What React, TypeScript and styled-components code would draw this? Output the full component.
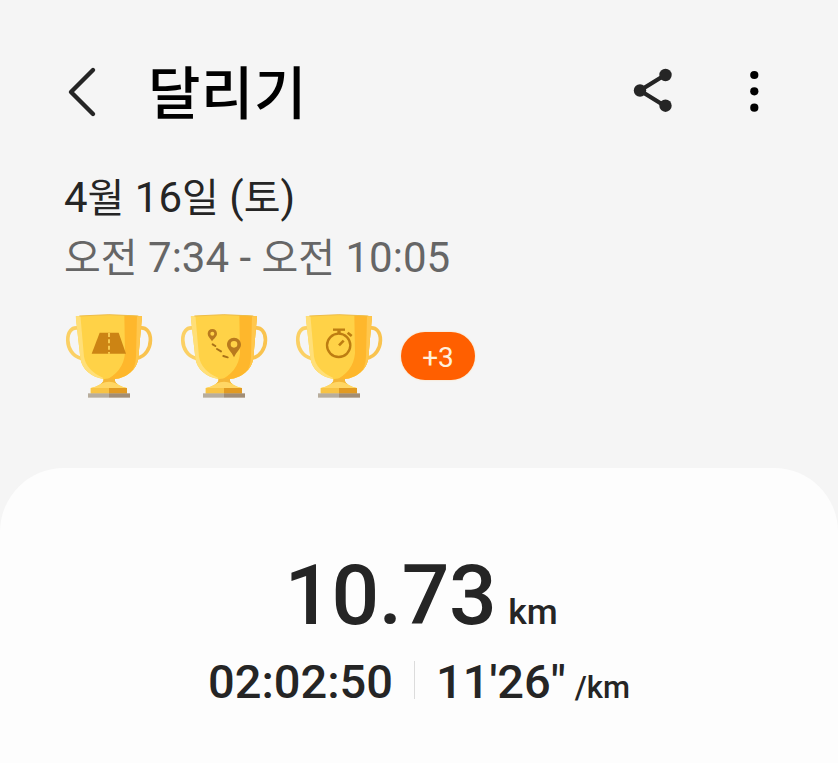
import React from 'react'
import styled, { createGlobalStyle } from 'styled-components'

const GlobalStyle = createGlobalStyle`
    * {
        box-sizing: border-box;
    }
    body {
        margin: 0;
        background-color: #f5f5f5;
        font-family: Roboto, "Noto Sans CJK KR", sans-serif;
        color: #252525;
    }
`

const Page = styled.div`
    display: flex;
    flex-direction: column;
    height: 763px;
    overflow: hidden;
`

const Header = styled.header`
    display: flex;
    align-items: center;
    height: 80px;
    margin-top: 52px;
    padding: 0 65px 0 64px;
`

const IconButton = styled.button<{ $width: number }>`
    display: flex;
    width: ${({ $width }) => $width}px;
    height: 60px;
    padding: 0;
    align-items: center;
    justify-content: center;
    border: none;
    background: none;
`

const Title = styled.h1`
    flex: 1;
    margin: 0 0 0 48px;
    padding-top: 6px;
    font-size: 57px;
    line-height: 80px;
    font-weight: 500;
    letter-spacing: 0.5px;
    color: #000;
`

const Actions = styled.div`
    display: flex;
    gap: 54px;
`

const Summary = styled.section`
    height: 336px;
    padding: 36px 64px 0;
`

const DateText = styled.p`
    margin: 0;
    font-size: 42px;
    line-height: 60px;
`

const TimeRange = styled(DateText)`
    color: #666;
`

/* hangul runs a bit large next to Roboto digits */
const Ko = styled.span`
    font-size: 40px;
    line-height: 1;
`

const Rewards = styled.div`
    display: flex;
    align-items: center;
    gap: 27px;
    margin: 24px 0 0 0.5px;
`

const More = styled.span`
    width: 74px;
    height: 48px;
    margin: -1px 0 0 -8.5px;
    border-radius: 24px;
    background-color: #ff5f00;
    box-shadow: 0 0 2px #ffd9a8;
    color: #fff0dc;
    font-size: 28px;
    line-height: 51px;
    text-align: center;
`

const Card = styled.main`
    flex: 1;
    padding: 79px 0 0;
    border-radius: 64px 64px 0 0;
    background-color: #fdfdfd;
`

const Distance = styled.div`
    display: flex;
    align-items: baseline;
    justify-content: center;
    gap: 12px;
    height: 100px;
    padding-left: 4px;
    font-size: 84px;
    line-height: 98px;
    font-weight: 500;
    letter-spacing: -0.5px;
`

const Unit = styled.span<{ $size: number }>`
    font-size: ${({ $size }) => $size}px;
    line-height: 1;
    letter-spacing: 0;
    font-weight: 500;
`

const Stats = styled.div`
    display: flex;
    align-items: center;
    justify-content: center;
    height: 70px;
    font-size: 47px;
    line-height: 70px;
    font-weight: 500;
`

const Divider = styled.span`
    width: 1px;
    height: 38px;
    margin: -4px 21px 0;
    background-color: #dcdcdc;
`

const Pace = styled.div`
    display: flex;
    align-items: baseline;
    gap: 9px;
`

const RoadMark = () => (
    <>
        <path d="M134 98H191L213 161H110Z" fill="#cc8414" />
        <path d="M162 99V161" stroke="#ffd75a" strokeWidth="5" strokeDasharray="12 7" />
    </>
)

const RouteMark = () => (
    <g fill="#b97a1e">
        <path fillRule="evenodd" d="M127 87c-8 0-14 6-14 14 0 8 8 14 13 23 6-9 15-15 15-23 0-8-6-14-14-14zm0 8a6 6 0 1 1 0 12 6 6 0 0 1 0-12z" />
        <path fillRule="evenodd" d="M192 113c-12 0-21 9-21 21 0 12 14 21 21 38 7-17 21-26 21-38 0-12-9-21-21-21zm0 10a10 10 0 1 1 0 20 10 10 0 0 1 0-20z" />
        <path d="M128 133l8 5M141 147l12 7M160 168l13 4" stroke="#a87218" strokeWidth="6" strokeLinecap="round" />
    </g>
)

const TimerMark = () => (
    <g fill="none" stroke="#bd7d12">
        <circle cx="161" cy="136" r="35" strokeWidth="7" />
        <path d="M144 89H180" strokeWidth="7" />
        <path d="M162 91V102" strokeWidth="10" />
        <path d="M188 98l12 10" strokeWidth="8" />
        <path d="M162 136l14-14" strokeWidth="8" />
    </g>
)

const Trophy = ({ id, children }: { id: string; children: React.ReactNode }) => (
    <svg width="88" height="88" viewBox="30 36 264 264">
        <defs>
            <clipPath id={id}>
                <path d="M62 49Q162 40 261 49L250 173C246 210 212 234 180 237V244Q185 257 216 264V281H107V264Q138 257 145 244V237C112 231 80 210 76 173Z" />
            </clipPath>
        </defs>
        <g fill="none" strokeWidth="11">
            <path d="M72 85C27 72 25 164 79 175" stroke="#fbd064" />
            <path d="M251 85C298 72 300 164 245 175" stroke="#f9c34f" />
        </g>
        <g clipPath={`url(#${id})`}>
            <path d="M50 36H270V290H50Z" fill="#ffd247" />
            <path d="M60 44H76L87 170Q94 211 144 233L142 246H108Q70 210 70 160Z" fill="#ffdf78" />
            <path d="M208 44H270V244H145Q205 218 210 160Z" fill="#feb72c" />
            <path d="M246 44H270V190L225 225Q242 200 243 170Z" fill="#ffc74d" />
            <path d="M145 238Q162 233 180 238L188 252H138Z" fill="#f4b638" />
            <path d="M138 251Q162 240 186 251L216 264H107Z" fill="#ffd665" />
            <path d="M107 264H162V282H107Z" fill="#f8c344" />
            <path d="M162 264H217V282H162Z" fill="#e19a22" />
        </g>
        <path d="M73 48Q162 40 250 48" fill="none" stroke="#eebd48" strokeWidth="3" />
        <path d="M99 280H162V293H99Z" fill="#b7ad9d" />
        <path d="M162 280H225V293H162Z" fill="#a18d75" />
        {children}
    </svg>
)

const App: React.FC = () => (
    <>
        <GlobalStyle />
        <Page>
            <Header>
                <IconButton $width={36} aria-label="뒤로">
                    <svg width="36" height="60" viewBox="0 0 36 60">
                        <path d="M29 8L7 30L29 52" fill="none" stroke="#252525" strokeWidth="4.4" strokeLinecap="round" strokeLinejoin="round" />
                    </svg>
                </IconButton>
                <Title>달리기</Title>
                <Actions>
                    <IconButton $width={44} aria-label="공유">
                        <svg width="44" height="60" viewBox="0 0 44 60">
                            <path d="M34 13L9 28.5L34 44" fill="none" stroke="#252525" strokeWidth="4.3" />
                            <g fill="#252525">
                                <circle cx="34.5" cy="13" r="6.2" />
                                <circle cx="9" cy="28.5" r="6.2" />
                                <circle cx="34.5" cy="43.7" r="6.2" />
                            </g>
                        </svg>
                    </IconButton>
                    <IconButton $width={44} aria-label="더보기">
                        <svg width="44" height="60" viewBox="0 0 44 60">
                            <circle cx="25.3" cy="13" r="4.1" />
                            <circle cx="25.3" cy="29.3" r="4.1" />
                            <circle cx="25.3" cy="45.7" r="4.1" />
                        </svg>
                    </IconButton>
                </Actions>
            </Header>
            <Summary>
                <DateText>4<Ko>월</Ko> 16<Ko>일</Ko> (<Ko>토</Ko>)</DateText>
                <TimeRange><Ko>오전</Ko> 7:34 - <Ko>오전</Ko> 10:05</TimeRange>
                <Rewards>
                    <Trophy id="cup-road"><RoadMark /></Trophy>
                    <Trophy id="cup-route"><RouteMark /></Trophy>
                    <Trophy id="cup-timer"><TimerMark /></Trophy>
                    <More>+3</More>
                </Rewards>
            </Summary>
            <Card>
                <Distance>
                    10.73
                    <Unit $size={35.5}>km</Unit>
                </Distance>
                <Stats>
                    <span>02:02:50</span>
                    <Divider />
                    <Pace>
                        11'26"
                        <Unit $size={31}>/km</Unit>
                    </Pace>
                </Stats>
            </Card>
        </Page>
    </>
)

export default App
